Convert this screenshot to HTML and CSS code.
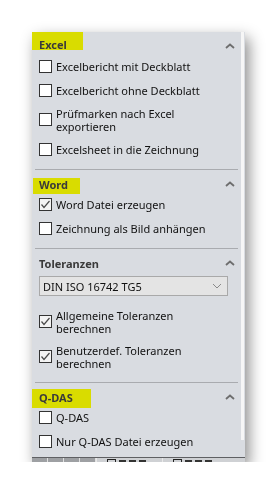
FILE: index.html
```html
<!DOCTYPE html>
<html lang="de">
<head>
  <meta charset="UTF-8">
  <title>Export</title>
  <meta name="viewport" content="width=device-width, initial-scale=1.0">
  <link rel="stylesheet" href="styles.css">
</head>
<body>

<div class="panel">
  <div class="panel-body">

    <div class="section section-first">
      <div class="section-head">
        <span class="hl hl-excel"></span>
        <span class="title">Excel</span>
        <svg class="chev" width="10" height="6" viewBox="0 0 10 6"><polyline points="1,5 5,1.5 9,5" /></svg>
      </div>
      <label class="row"><span class="box"></span><span>Excelbericht mit Deckblatt</span></label>
      <label class="row"><span class="box"></span><span>Excelbericht ohne Deckblatt</span></label>
      <label class="row row-2"><span class="box"></span><span>Prüfmarken nach Excel<br>exportieren</span></label>
      <label class="row"><span class="box"></span><span>Excelsheet in die Zeichnung</span></label>
    </div>

    <div class="section">
      <div class="section-head">
        <span class="hl hl-word"></span>
        <span class="title">Word</span>
        <svg class="chev" width="10" height="6" viewBox="0 0 10 6"><polyline points="1,5 5,1.5 9,5" /></svg>
      </div>
      <label class="row"><span class="box checked"><svg width="11" height="11" viewBox="0 0 11 11"><polyline points="1.5,5.5 4,8.5 9.5,2" /></svg></span><span>Word Datei erzeugen</span></label>
      <label class="row"><span class="box"></span><span>Zeichnung als Bild anhängen</span></label>
    </div>

    <div class="section">
      <div class="section-head">
        <span class="title">Toleranzen</span>
        <svg class="chev" width="10" height="6" viewBox="0 0 10 6"><polyline points="1,5 5,1.5 9,5" /></svg>
      </div>
      <div class="select">
        <span>DIN ISO 16742 TG5</span>
        <svg width="10" height="6" viewBox="0 0 10 6"><polyline points="1,1 5,5 9,1" /></svg>
      </div>
      <label class="row row-2"><span class="box checked"><svg width="11" height="11" viewBox="0 0 11 11"><polyline points="1.5,5.5 4,8.5 9.5,2" /></svg></span><span>Allgemeine Toleranzen<br>berechnen</span></label>
      <label class="row row-2"><span class="box checked"><svg width="11" height="11" viewBox="0 0 11 11"><polyline points="1.5,5.5 4,8.5 9.5,2" /></svg></span><span>Benutzerdef. Toleranzen<br>berechnen</span></label>
    </div>

    <div class="section section-last">
      <div class="section-head">
        <span class="hl hl-qdas"></span>
        <span class="title">Q-DAS</span>
        <svg class="chev" width="10" height="6" viewBox="0 0 10 6"><polyline points="1,5 5,1.5 9,5" /></svg>
      </div>
      <label class="row"><span class="box"></span><span>Q-DAS</span></label>
      <label class="row"><span class="box"></span><span>Nur Q-DAS Datei erzeugen</span></label>
    </div>

  </div>

  <div class="scrollbar"><div class="scroll-thumb"></div></div>

  <!-- cut-off tab strip at the bottom edge -->
  <div class="tabs">
    <span class="tab-btn"></span><span class="tab-btn"></span><span class="tab-btn"></span><span class="tab-btn"></span>
    <span class="tab"><i></i><b></b><b></b><b></b></span>
    <span class="tab"><i></i><b></b><b></b><b></b></span>
  </div>
</div>

</body>
</html>
```

FILE: styles.css
```css
* {
  box-sizing: border-box;
}

body {
  margin: 0;
  background: #fff;
  font-family: "Noto Sans", "Open Sans", sans-serif;
  font-size: 11px;
  color: #111;
}

.panel {
  position: relative;
  margin: 32px 0 0 32px;
  width: 213px;
  height: 430px;
  background: #d9dce1;
  display: grid;
  grid-template-columns: 209px 4px;
  grid-template-rows: 425px 5px;
  box-shadow: 4px 6px 14px rgba(0, 0, 0, 0.45);
}

.panel-body {
  overflow: hidden;
}

.section {
  padding: 6px 0 8px;
  margin: 0 3px;
  border-bottom: 1px solid #a9abaf;
}

.section-last {
  border-bottom: none;
}

.section-head {
  position: relative;
  height: 16px;
  display: flex;
  align-items: center;
  padding-left: 4px;
}

.section-first .section-head .title {
  margin-top: -3px;
}

.title {
  position: relative;
  font-weight: bold;
  color: #3a3a3a;
}

.hl {
  position: absolute;
  background: #ffff00;
  mix-blend-mode: multiply;
}

.hl-excel {
  left: -3px;
  top: -6px;
  width: 51px;
  height: 18px;
}

.hl-word {
  left: -2px;
  top: 2px;
  width: 47px;
  height: 16px;
}

.hl-qdas {
  left: -3px;
  top: 0;
  width: 59px;
  height: 19px;
}

.chev {
  margin-left: auto;
  margin-right: 3px;
}

.chev polyline,
.select polyline {
  fill: none;
  stroke: #6e6e6e;
  stroke-width: 1.8;
}

.select polyline {
  stroke: #8a8a8a;
  stroke-width: 1;
}

.row {
  display: flex;
  align-items: center;
  height: 24px;
  padding-left: 4px;
  gap: 4px;
  line-height: 13px;
}

.row-2 {
  height: 35px;
}

.box {
  flex: none;
  width: 13px;
  height: 13px;
  border: 1px solid #333;
  background: #fff;
  display: flex;
  align-items: center;
  justify-content: center;
}

.box.checked {
  background: #f3f3f3;
}

.box polyline {
  fill: none;
  stroke: #4a4a4a;
  stroke-width: 1.2;
}

.select {
  margin: 5px 10px 8px 4px;
  height: 20px;
  border: 1px solid #a9a9a9;
  background: #e4e4e4;
  display: flex;
  align-items: center;
  justify-content: space-between;
  padding: 0 5px 0 3px;
  color: #111;
}

.scrollbar {
  background: #d9dce1;
  padding-right: 1px;
}

.scroll-thumb {
  height: 408px;
  background: #f6f6f6;
}

.tabs {
  grid-column: 1 / 3;
  display: flex;
  border-top: 1px solid #5f6063;
  background: #cfd1d4;
  overflow: hidden;
  height: 5px;
}

.tab-btn {
  width: 16px;
  background: #9ea0a3;
  border-right: 1px solid #e0e0e0;
}

.tab {
  display: flex;
  align-items: flex-start;
  gap: 3px;
  padding: 1px 0 0 10px;
  width: 66px;
  border-left: 1px solid #e8e8e8;
}

.tab i {
  width: 9px;
  height: 9px;
  border: 1px solid #222;
}

.tab b {
  width: 7px;
  height: 2px;
  margin-top: 1px;
  background: #333;
}
```
